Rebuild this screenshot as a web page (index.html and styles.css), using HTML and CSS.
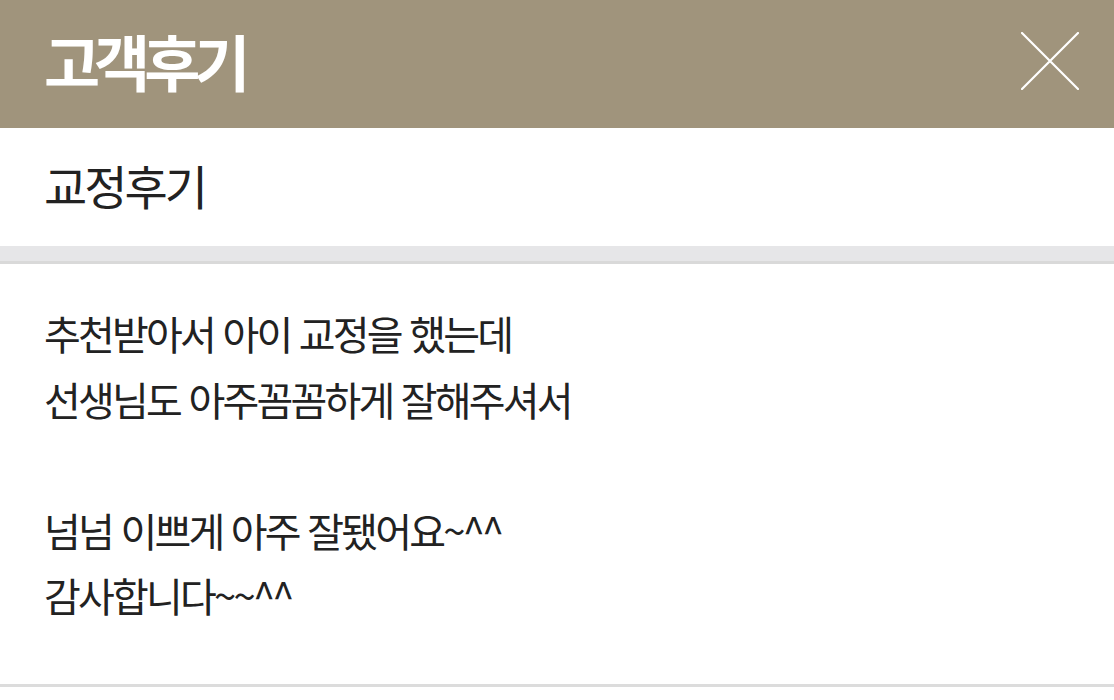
FILE: index.html
```html
<!DOCTYPE html>
<html lang="ko">
<head>
<meta charset="utf-8">
<link rel="stylesheet" href="styles.css">
</head>
<body>
<header class="top">
  <h1 class="title">고객후기</h1>
  <button class="close" aria-label="닫기">
    <svg width="58" height="58" viewBox="0 0 58 58"><path d="M1 1 L57 57 M57 1 L1 57" stroke="#fff" stroke-width="2.2" stroke-linecap="round" fill="none"/></svg>
  </button>
</header>
<div class="sub">교정후기</div>
<div class="band"></div>
<div class="content">
  <p>추천받아서 아이 교정을 했는데<br>선생님도 아주꼼꼼하게 잘해주셔서<br><br>넘넘 이쁘게 아주 잘됐어요~^^<br>감사합니다~~^^</p>
</div>
</body>
</html>
```
FILE: styles.css
```css
* { box-sizing: border-box; }
html, body { margin: 0; padding: 0; background: #fff; }
body { font-family: "Noto Sans CJK KR", "Noto Sans", sans-serif; color: #222; }
.top {
  height: 128px;
  background: #a0947c;
  display: flex;
  align-items: center;
  justify-content: space-between;
  padding: 0 35px 0 44px;
}
.title {
  margin: 0 0 8px;
  color: #fff;
  font-size: 61px;
  font-weight: 700;
  letter-spacing: -6px;
  line-height: 1;
}
.close {
  background: none;
  border: 0;
  padding: 0;
  width: 58px;
  height: 58px;
  margin-bottom: 6px;
}
.close svg { display: block; }
.sub {
  height: 118px;
  display: flex;
  align-items: center;
  padding: 0 0 6px 44px;
  font-size: 47px;
  letter-spacing: -3px;
  color: #222;
}
.band {
  height: 18px;
  background: #e6e6e8;
  border-bottom: 3px solid #d9d9d9;
}
.content {
  padding: 37px 44px 0;
  height: 423px;
  border-bottom: 3px solid #dcdcdc;
}
.content p {
  margin: 0;
  font-size: 40px;
  line-height: 65.5px;
  letter-spacing: -2.8px;
  color: #222;
}
```
